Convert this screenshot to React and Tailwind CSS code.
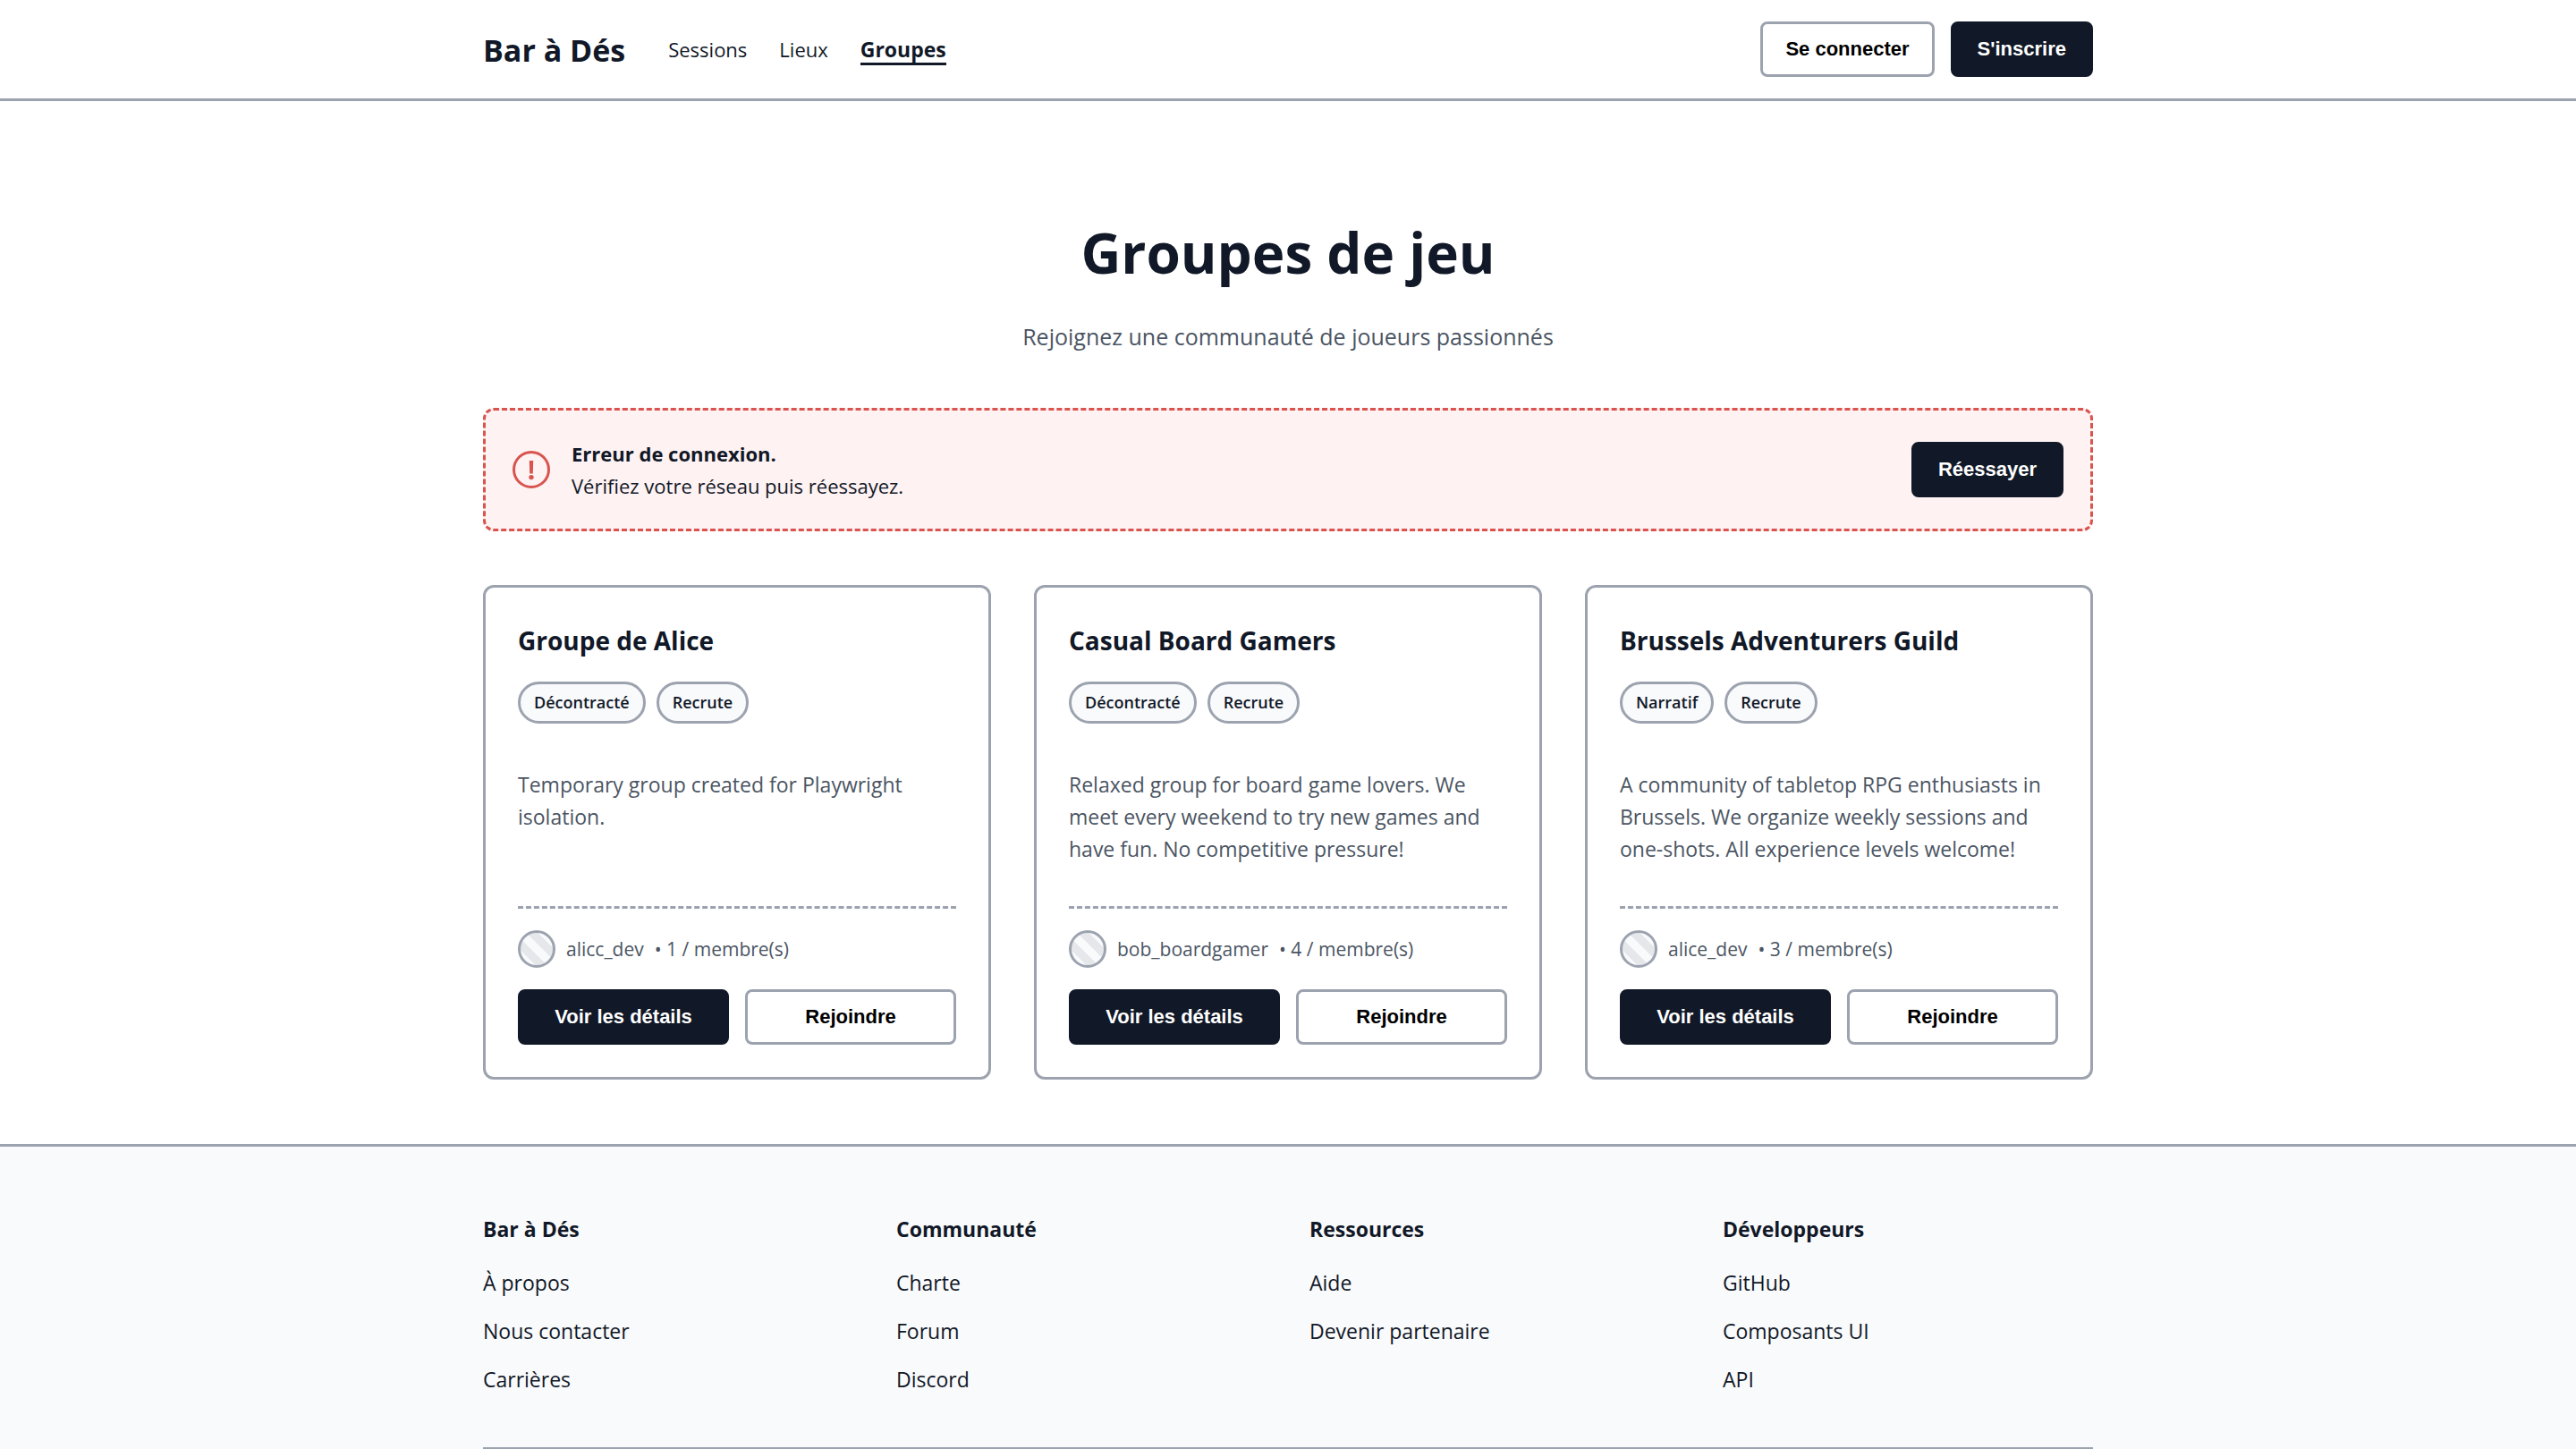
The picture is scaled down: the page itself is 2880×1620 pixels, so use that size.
const NAV_LINKS = [
  { label: "Sessions" },
  { label: "Lieux" },
  { label: "Groupes", active: true },
];

const GROUPS = [
  {
    name: "Groupe de Alice",
    tags: ["Décontracté", "Recrute"],
    description: "Temporary group created for Playwright isolation.",
    owner: "alicc_dev",
    members: 1,
  },
  {
    name: "Casual Board Gamers",
    tags: ["Décontracté", "Recrute"],
    description:
      "Relaxed group for board game lovers. We meet every weekend to try new games and have fun. No competitive pressure!",
    owner: "bob_boardgamer",
    members: 4,
  },
  {
    name: "Brussels Adventurers Guild",
    tags: ["Narratif", "Recrute"],
    description:
      "A community of tabletop RPG enthusiasts in Brussels. We organize weekly sessions and one-shots. All experience levels welcome!",
    owner: "alice_dev",
    members: 3,
  },
];

const FOOTER_COLUMNS = [
  { title: "Bar à Dés", links: ["À propos", "Nous contacter", "Carrières"] },
  { title: "Communauté", links: ["Charte", "Forum", "Discord"] },
  { title: "Ressources", links: ["Aide", "Devenir partenaire"] },
  { title: "Développeurs", links: ["GitHub", "Composants UI", "API"] },
];

const BUTTON_BASE =
  "h-[62px] cursor-pointer whitespace-nowrap rounded-lg border-[3px] font-['Liberation_Sans',Arial,sans-serif] text-[22px] leading-7 font-bold";

function Button({ variant = "primary", children }) {
  const look =
    variant === "primary"
      ? "border-[#111827] bg-[#111827] px-[27px] text-white"
      : "border-[#9ca3af] bg-white px-[25px] text-black";
  return (
    <button type="button" className={`${BUTTON_BASE} ${look}`}>
      {children}
    </button>
  );
}

function Header() {
  return (
    <header className="border-b-[3px] border-[#9ca3af] bg-white py-6">
      <div className="mx-auto flex max-w-[1800px] items-center justify-between">
        <div className="flex items-center gap-12 pt-0.5">
          <a href="#" className="text-[34px] leading-[54px] font-bold">
            Bar à Dés
          </a>
          <nav className="flex items-center gap-9">
            {NAV_LINKS.map((link) => (
              <a
                key={link.label}
                href="#"
                aria-current={link.active ? "page" : undefined}
                className={
                  link.active
                    ? "border-b-[3px] border-[#111827] text-[23px] leading-[30px] font-bold"
                    : "border-b-[3px] border-transparent text-[22px] leading-[30px]"
                }
              >
                {link.label}
              </a>
            ))}
          </nav>
        </div>
        <div className="flex gap-[18px]">
          <Button variant="outline">Se connecter</Button>
          <Button>S'inscrire</Button>
        </div>
      </div>
    </header>
  );
}

function ErrorAlert() {
  return (
    <div
      role="alert"
      className="mt-[60px] flex items-center gap-6 rounded-xl border-[3px] border-dashed border-[#d9534f] bg-[#fef2f2] p-[30px]"
    >
      <svg viewBox="0 0 42 42" className="size-[42px] shrink-0" aria-hidden="true">
        <circle cx="21" cy="21" r="19.5" fill="none" stroke="#d9534f" strokeWidth="3" />
        <path d="M18.8 11h4.4l-0.4 14.4h-3.6z" fill="#d9534f" />
        <circle cx="21" cy="29.6" r="2.7" fill="#d9534f" />
      </svg>
      <div className="flex-1 text-[22px] leading-9">
        <p className="font-bold">Erreur de connexion.</p>
        <p>Vérifiez votre réseau puis réessayez.</p>
      </div>
      <Button>Réessayer</Button>
    </div>
  );
}

function GroupCard({ group }) {
  return (
    <article className="flex flex-col rounded-xl border-[3px] border-[#9ca3af] bg-white p-9">
      <h2 className="text-[28px] leading-[46px] font-bold">{group.name}</h2>
      <ul className="mt-[23px] flex gap-3">
        {group.tags.map((tag) => (
          <li
            key={tag}
            className="rounded-full border-[3px] border-[#9ca3af] bg-[#f9fafc] px-[15px] py-1.5 text-[18px] leading-[29px] font-semibold"
          >
            {tag}
          </li>
        ))}
      </ul>
      <p className="mt-[50px] mb-[46px] flex-1 text-[23px] leading-9 text-[#4b5563]">
        {group.description}
      </p>
      <div className="flex items-center gap-3 border-t-[3px] border-dashed border-[#9ca3af] pt-6 text-[21px] leading-8 text-[#4b5563]">
        <span className="size-[42px] shrink-0 rounded-full border-[3px] border-[#9ca3af] bg-[linear-gradient(45deg,#f9fafc_12px,#e5e7eb_12px,#e5e7eb_21px,#f9fafc_21px,#f9fafc_30px,#e5e7eb_30px,#e5e7eb_39px,#f9fafc_39px)]" />
        <span>{group.owner}</span>
        <span>• {group.members} / membre(s)</span>
      </div>
      <div className="mt-6 grid grid-cols-2 gap-[18px]">
        <Button>Voir les détails</Button>
        <Button variant="outline">Rejoindre</Button>
      </div>
    </article>
  );
}

function Footer() {
  return (
    <footer className="border-t-[3px] border-[#9ca3af] bg-[#f9fafc] pt-[74px]">
      <div className="mx-auto max-w-[1800px]">
        <div className="grid grid-cols-4 gap-12 pb-[58px]">
          {FOOTER_COLUMNS.map((column) => (
            <section key={column.title}>
              <h3 className="text-[23px] leading-9 font-bold">{column.title}</h3>
              <ul className="mt-6 flex flex-col gap-[18px] text-[23px] leading-9">
                {column.links.map((link) => (
                  <li key={link}>
                    <a href="#">{link}</a>
                  </li>
                ))}
              </ul>
            </section>
          ))}
        </div>
        <hr className="border-t-2 border-[#9ca3af]" />
      </div>
    </footer>
  );
}

export default function App() {
  return (
    <div className="bg-white font-['Open_Sans','Noto_Sans',sans-serif] text-[#111827]">
      <Header />
      <main className="mx-auto max-w-[1800px] pt-[129px] pb-[72px]">
        <h1 className="text-center text-[62px] leading-[80px] font-bold">Groupes de jeu</h1>
        <p className="mt-[34px] text-center text-[25px] leading-10 text-[#4b5563]">
          Rejoignez une communauté de joueurs passionnés
        </p>
        <ErrorAlert />
        <div className="mt-[60px] grid grid-cols-3 gap-12">
          {GROUPS.map((group) => (
            <GroupCard key={group.name} group={group} />
          ))}
        </div>
      </main>
      <Footer />
    </div>
  );
}
